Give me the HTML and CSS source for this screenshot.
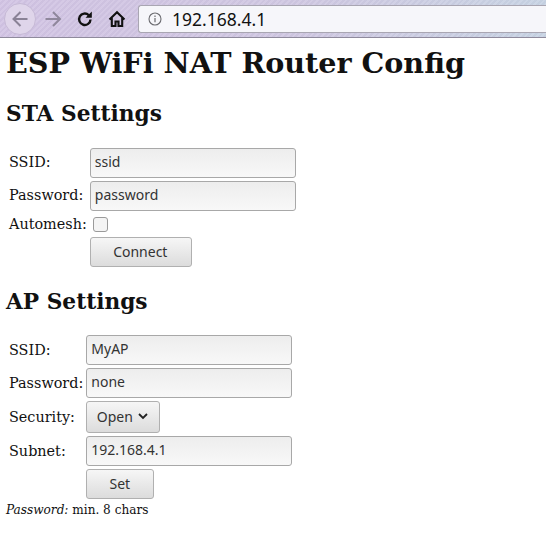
FILE: index.html
```html
<!DOCTYPE html>
<html lang="en">
<head>
    <meta charset="UTF-8">
    <title>ESP WiFi NAT Router Config</title>
    <link rel="stylesheet" href="styles.css">
</head>
<body>
    <div class="toolbar">
        <div class="back">
            <svg width="20" height="20" viewBox="0 0 20 20"><path d="M17.500 10H3.500M10.500 3L3.500 10l7 7" fill="none" stroke="#8a8296" stroke-width="2"/></svg>
        </div>
        <svg class="tool" width="20" height="20" viewBox="0 0 20 20"><path d="M2.500 10h14.500M10 3l7 7-7 7" fill="none" stroke="#8f879c" stroke-width="2"/></svg>
        <svg class="tool reload" width="18" height="18" viewBox="0 0 18 18"><path d="M14.500 9.500a5.700 5.700 0 1 1-1.800-4.400" fill="none" stroke="#111" stroke-width="2.400"/><path d="M15.800 1.500v6.300H9.500z" fill="#111"/></svg>
        <svg class="tool home" width="18" height="18" viewBox="0 0 18 18"><path d="M1.500 9.500L9 2.300l7.500 7.200M3.800 8v8h3.700v-4.500h3V16h3.700V8" fill="none" stroke="#111" stroke-width="2.100"/></svg>
        <div class="urlbar">
            <svg width="14" height="14" viewBox="0 0 14 14"><circle cx="7" cy="7" r="6" fill="none" stroke="#6b6b70" stroke-width="1.100"/><path d="M7 6v4.200M7 3.600v1.300" stroke="#6b6b70" stroke-width="1.200"/></svg>
            <span class="url">192.168.4.1</span>
        </div>
    </div>

    <div class="content">
        <h1>ESP WiFi NAT Router Config</h1>

        <h2>STA Settings</h2>
        <table class="form">
            <tr>
                <td class="label">SSID:</td>
                <td><input class="field" type="text" value="ssid"></td>
            </tr>
            <tr>
                <td class="label">Password:</td>
                <td><input class="field" type="text" value="password"></td>
            </tr>
            <tr>
                <td class="label label-plain">Automesh:</td>
                <td><span class="check"></span></td>
            </tr>
            <tr>
                <td></td>
                <td><button class="btn btn-connect">Connect</button></td>
            </tr>
        </table>

        <h2 class="ap-title">AP Settings</h2>
        <table class="form ap">
            <tr>
                <td class="label label-plain">SSID:</td>
                <td><input class="field" type="text" value="MyAP"></td>
            </tr>
            <tr>
                <td class="label label-plain">Password:</td>
                <td><input class="field" type="text" value="none"></td>
            </tr>
            <tr>
                <td class="label label-plain">Security:</td>
                <td>
                    <button class="btn btn-select">Open
                        <svg width="10" height="7" viewBox="0 0 10 7"><path d="M1 1l4 4 4-4" fill="none" stroke="#222" stroke-width="1.800"/></svg>
                    </button>
                </td>
            </tr>
            <tr>
                <td class="label label-plain">Subnet:</td>
                <td><input class="field" type="text" value="192.168.4.1"></td>
            </tr>
            <tr>
                <td></td>
                <td><button class="btn btn-set">Set</button></td>
            </tr>
        </table>
        <p class="note"><em>Password:</em> min. 8 chars</p>
    </div>
</body>
</html>
```

FILE: styles.css
```css
html, body {
    margin: 0;
    padding: 0;
    background-color: white;
}
body {
    font-family: "DejaVu Serif", serif;
    font-size: 14.4px;
    color: #111;
    overflow: hidden;
}
.toolbar {
    display: flex;
    align-items: center;
    height: 38px;
    box-sizing: border-box;
    border-bottom: 1px solid #8f8a9c;
    background:
        repeating-linear-gradient(135deg, rgba(255,255,255,0.08) 0 2px, rgba(0,0,0,0.02) 2px 4px),
        linear-gradient(to right, #d2c4e4, #d0c8e2 55%, #c8d4e4);
    padding-left: 4px;
}
.back {
    width: 32px;
    height: 32px;
    box-sizing: border-box;
    border: 1px solid #c6b9d6;
    border-radius: 50%;
    background-color: #dfd5ea;
    display: flex;
    align-items: center;
    justify-content: center;
}
.tool {
    flex: none;
}
.toolbar > .tool:nth-child(2) {
    margin-left: 7px;
}
.reload {
    margin-left: 13px;
}
.home {
    margin-left: 14px;
}
.urlbar {
    flex: 1;
    height: 28px;
    margin-left: 12px;
    box-sizing: border-box;
    border: 1px solid #a9a6b2;
    border-right: none;
    border-radius: 3px 0 0 3px;
    background-color: #f6f6fa;
    display: flex;
    align-items: center;
    padding-left: 9px;
    gap: 10px;
}
.url {
    font-family: "Noto Sans", sans-serif;
    font-size: 17.5px;
    color: #111;
}
.content {
    padding-left: 6px;
}
h1 {
    font-size: 28.6px;
    margin: 6px 0 0;
    line-height: 38px;
    color: #111;
}
h2 {
    font-size: 21.7px;
    margin: 17px 0 16px;
    line-height: 30px;
}
.ap-title {
    margin-top: 17px;
    margin-bottom: 15px;
}
.form {
    border-collapse: separate;
    border-spacing: 3px 3px;
    margin: 0;
}
.form td {
    padding: 0;
}
.form .label {
    line-height: 18px;
    padding-bottom: 2px;
}
.form .label-plain {
    line-height: 20px;
    padding-bottom: 0;
}
.field {
    display: block;
    box-sizing: border-box;
    width: 206px;
    height: 30px;
    padding: 0 4px 3px;
    border: 1px solid #a8a8a8;
    border-radius: 3px;
    background: linear-gradient(#ededed, #f8f8f8);
    font-family: "Noto Sans", sans-serif;
    font-size: 14px;
    color: #333;
}
.check {
    display: block;
    width: 13px;
    height: 13px;
    margin-left: 3px;
    border: 1px solid #9a9a9a;
    border-radius: 3px;
    background-color: #f4f4f4;
}
.btn {
    display: flex;
    align-items: center;
    justify-content: center;
    box-sizing: border-box;
    height: 30px;
    padding: 0 0 2px;
    border: 1px solid #b0b0b0;
    border-radius: 3px;
    background: linear-gradient(#f6f6f6, #dcdcdc);
    font-family: "Noto Sans", sans-serif;
    font-size: 14px;
    color: #333;
}
.btn-connect {
    width: 102px;
    padding-right: 1px;
}
.btn-set {
    width: 68px;
    padding-right: 1px;
}
.btn-select {
    width: 74px;
    height: 32px;
    gap: 5px;
    padding-right: 2px;
}
.note {
    margin: 0;
    font-size: 12.1px;
    line-height: 16px;
}
```
